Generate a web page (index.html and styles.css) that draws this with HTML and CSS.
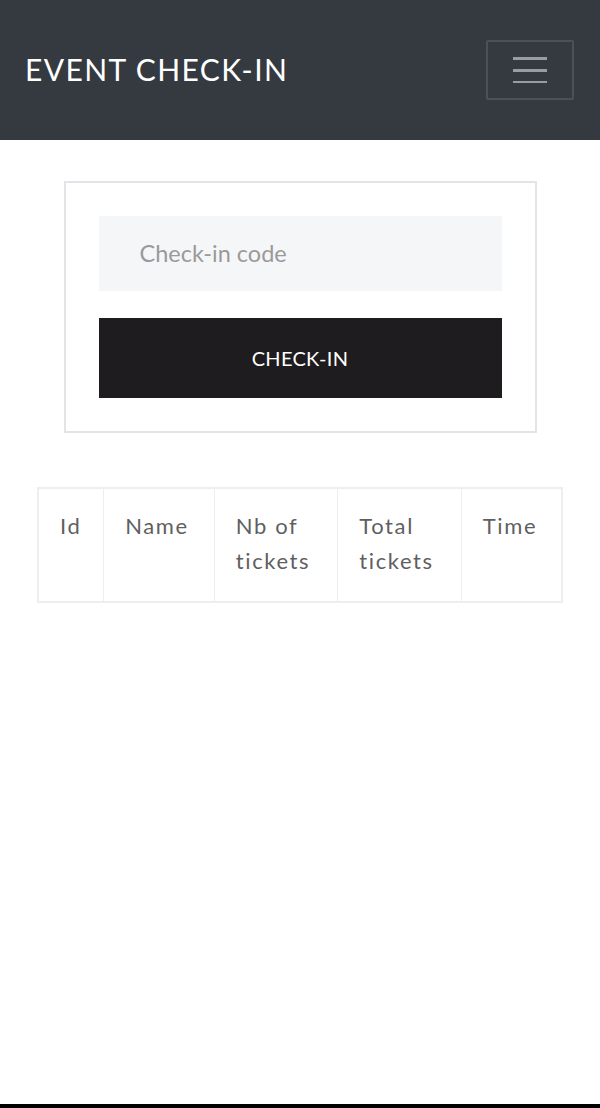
FILE: index.html
```html
<!DOCTYPE html>
<html lang="en">
<head>
<meta charset="utf-8">
<title>Event Check-in</title>
<link rel="stylesheet" href="styles.css">
</head>
<body>
  <div class="page">
    <nav class="navbar">
      <span class="brand">EVENT CHECK-IN</span>
      <button class="toggler" type="button" aria-label="Toggle navigation">
        <svg width="34" height="30" viewBox="0 0 34 30">
          <path d="M0 5.5h34M0 17.5h34M0 29.5h34" stroke="#9a9c9f" stroke-width="3"/>
        </svg>
      </button>
    </nav>
    <main class="main">
      <form class="card">
        <input class="code-input" type="text" placeholder="Check-in code">
        <button class="submit" type="button">CHECK-IN</button>
      </form>
      <table class="table">
        <thead>
          <tr>
            <th class="c-id">Id</th>
            <th class="c-name">Name</th>
            <th class="c-nb">Nb of tickets</th>
            <th class="c-total">Total tickets</th>
            <th class="c-time">Time</th>
          </tr>
        </thead>
      </table>
    </main>
    <div class="bottom-bar"></div>
  </div>
</body>
</html>
```

FILE: styles.css
```css
* { box-sizing: border-box; }
html, body { margin: 0; padding: 0; }
body {
  font-family: Lato, "Open Sans", sans-serif;
  background: #fff;
}
.page {
  height: 1108px;
  display: flex;
  flex-direction: column;
}
.navbar {
  height: 140px;
  background: #343a40;
  display: flex;
  align-items: center;
  justify-content: space-between;
  padding: 0 26px 0 25px;
}
.brand {
  color: #fff;
  font-size: 30px;
  letter-spacing: 1.4px;
  font-weight: 400;
  margin-top: -3px;
}
.toggler {
  width: 88px;
  height: 60px;
  background: transparent;
  border: 2px solid rgba(255,255,255,0.12);
  border-radius: 2px;
  display: flex;
  align-items: center;
  justify-content: center;
  padding: 0;
}
.toggler svg { display: block; margin-top: -4px; }
.main {
  flex: 1;
  display: flex;
  flex-direction: column;
  align-items: center;
  padding-top: 41px;
}
.card {
  width: 473px;
  border: 2px solid #e3e4e8;
  padding: 33px;
  display: flex;
  flex-direction: column;
  gap: 27px;
  margin: 0;
}
.code-input {
  height: 75px;
  border: none;
  background: #f5f6f8;
  padding: 0 0 2px 41px;
  font-family: inherit;
  font-size: 23.5px;
  color: #333;
  outline: none;
}
.code-input::placeholder { color: #9a9a9a; }
.submit {
  height: 80px;
  border: none;
  background: #1e1c1f;
  color: #fff;
  font-family: inherit;
  font-size: 20px;
  letter-spacing: 0.3px;
  padding: 0;
}
.table {
  margin-top: 54px;
  width: 526px;
  border-collapse: collapse;
  border: 2px solid #eeeef0;
}
.table th {
  border: 1.5px solid #eeeef0;
  text-align: left;
  vertical-align: top;
  font-weight: 400;
  font-size: 22px;
  letter-spacing: 1.6px;
  line-height: 35px;
  color: #5f5f5f;
  padding: 19px 18px 20px 21px;
  height: 114px;
}
.c-id { width: 66px; }
.c-name { width: 111px; }
.c-nb { width: 124px; }
.c-total { width: 124px; }
.c-time { width: 101px; }
.bottom-bar {
  height: 4px;
  background: #000;
}
```
